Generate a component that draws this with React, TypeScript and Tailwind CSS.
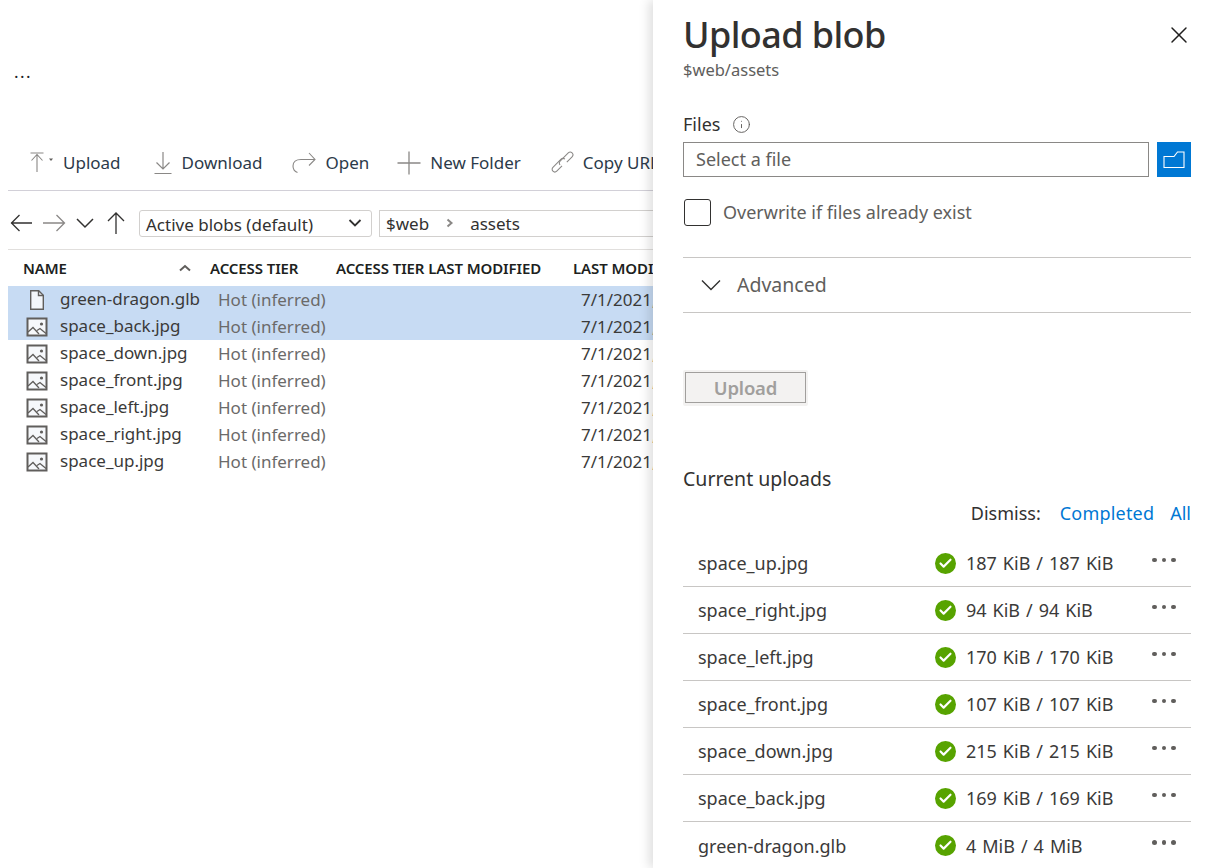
import React from 'react';
import { X, Info, Check } from 'lucide-react';

const blobs = [
  { name: 'green-dragon.glb', icon: 'file', selected: true },
  { name: 'space_back.jpg', icon: 'image', selected: true },
  { name: 'space_down.jpg', icon: 'image', selected: false },
  { name: 'space_front.jpg', icon: 'image', selected: false },
  { name: 'space_left.jpg', icon: 'image', selected: false },
  { name: 'space_right.jpg', icon: 'image', selected: false },
  { name: 'space_up.jpg', icon: 'image', selected: false },
];

const uploads = [
  { name: 'space_up.jpg', size: '187 KiB / 187 KiB' },
  { name: 'space_right.jpg', size: '94 KiB / 94 KiB' },
  { name: 'space_left.jpg', size: '170 KiB / 170 KiB' },
  { name: 'space_front.jpg', size: '107 KiB / 107 KiB' },
  { name: 'space_down.jpg', size: '215 KiB / 215 KiB' },
  { name: 'space_back.jpg', size: '169 KiB / 169 KiB' },
  { name: 'green-dragon.glb', size: '4 MiB / 4 MiB' },
];

function FileIcon() {
  return (
    <svg width="22" height="22" viewBox="0 0 22 22" fill="none" stroke="#605e5c" strokeWidth="1.4">
      <path d="M4.7 1.7h8l4.6 4.6v14H4.7z" fill="#f3f6fa" />
      <path d="M12.5 1.7v4.8h4.8" />
    </svg>
  );
}

function ImageIcon() {
  return (
    <svg width="22" height="22" viewBox="0 0 22 22" fill="none" stroke="#605e5c" strokeWidth="2">
      <rect x="1.5" y="2.5" width="19" height="17" fill="#f6f8fb" />
      <path d="M2 16l5-4.5 6 6.5M11 14.5l3-2 6 5" strokeWidth="1.3" />
      <circle cx="15.5" cy="8" r="1.6" fill="#605e5c" stroke="none" />
    </svg>
  );
}

function ToolbarItem({ icon, label }: { icon: React.ReactNode; label: string }) {
  return (
    <div className="flex items-center gap-[9px] shrink-0">
      {icon}
      <span className="whitespace-nowrap">{label}</span>
    </div>
  );
}

export default function App() {
  return (
    <div className="relative h-[868px] w-[1221px] overflow-hidden bg-white font-['Noto_Sans','Open_Sans',sans-serif] text-[17px] text-[#323130]">
      {/* Explorer behind the panel */}
      <div className="flex h-full w-[653px] flex-col overflow-hidden">
        <div className="h-[62px] shrink-0" />
        <div className="ml-[14px] h-[20px] shrink-0 text-[17px] leading-[20px] tracking-[1.5px] text-[#201f1e]">...</div>

        {/* Toolbar */}
        <div className="ml-[8px] mt-[44px] flex h-[65px] w-[720px] shrink-0 items-center border-b border-[#d2d0d8] pl-[22px] pt-[10px] text-[#2c3a4a]">
          <ToolbarItem
            label="Upload"
            icon={
              <svg width="24" height="24" viewBox="0 0 24 24" fill="none" stroke="#8a8886" strokeWidth="1.1">
                <path d="M0.5 2h13M7 3v18M1.5 9.5L7 3.5l5.5 6" />
                <path d="M19 7.5h4l-2 2.5z" fill="#605e5c" stroke="none" />
              </svg>
            }
          />
          <div className="ml-[32px]">
            <ToolbarItem
              label="Download"
              icon={
                <svg width="20" height="24" viewBox="0 0 20 24" fill="none" stroke="#8a8886" strokeWidth="1.2">
                  <path d="M10 1v17M3.5 11.5l6.5 6.5 6.5-6.5M1.5 22.5h17" />
                </svg>
              }
            />
          </div>
          <div className="ml-[30px]">
            <ToolbarItem
              label="Open"
              icon={
                <svg width="24" height="24" viewBox="0 0 24 24" fill="none" stroke="#8a8886" strokeWidth="1.1">
                  <path d="M17 2l6 6.5-6 6M23 8.5H9c-5 0-8 2.5-8 6.5 0 3 1.5 5.5 4.5 6.5" />
                </svg>
              }
            />
          </div>
          <div className="ml-[28px]">
            <ToolbarItem
              label="New Folder"
              icon={
                <svg width="24" height="24" viewBox="0 0 24 24" fill="none" stroke="#8a8886" strokeWidth="1.3">
                  <path d="M12 0.5v23M0.5 12h23" />
                </svg>
              }
            />
          </div>
          <div className="ml-[30px]">
            <ToolbarItem
              label="Copy URL"
              icon={
                <svg width="23" height="24" viewBox="0 0 24 24" fill="none" stroke="#8a8886" strokeWidth="1.1">
                  <path d="M10 14l-5.5 5.5a2.8 2.8 0 0 1-4-4L9 7a2.8 2.8 0 0 1 4 0" transform="translate(1.5 1)" />
                  <path d="M14 10l5.5-5.5a2.8 2.8 0 0 0-4-4L7 9a2.8 2.8 0 0 0 0 4" transform="translate(2.5 1)" />
                </svg>
              }
            />
          </div>
        </div>

        {/* Filter and path row */}
        <div className="ml-[8px] flex h-[59px] w-[720px] shrink-0 items-center border-b border-[#e1dfdd] pt-[6px]">
          <div className="ml-[2px] flex w-[129px] items-center pr-[8px]">
            <svg width="24" height="24" viewBox="0 0 24 24" fill="none" stroke="#323130" strokeWidth="1.3">
              <path d="M1 12h21M9.5 4L1.5 12l8 8" />
            </svg>
            <svg width="24" height="24" viewBox="0 0 24 24" fill="none" stroke="#8a8886" strokeWidth="1.3" className="ml-[8px]">
              <path d="M1 12h21M14.5 4l8 8-8 8" />
            </svg>
            <svg width="20" height="24" viewBox="0 0 20 24" fill="none" stroke="#323130" strokeWidth="1.5" className="ml-[9px]">
              <path d="M2 8l8 8 8-8" />
            </svg>
            <svg width="20" height="24" viewBox="0 0 20 24" fill="none" stroke="#323130" strokeWidth="1.3" className="ml-[11px]">
              <path d="M10 23V2M2 10l8-8 8 8" />
            </svg>
          </div>
          <div className="flex h-[27px] w-[233px] items-center justify-between rounded-[3px] border border-[#d2d0ce] pl-[6px] pr-[9px] text-[#323130]">
            <span className="whitespace-nowrap pt-[3px]">Active blobs (default)</span>
            <svg width="14" height="10" viewBox="0 0 14 10" fill="none" stroke="#323130" strokeWidth="1.8">
              <path d="M1.5 2l5.5 5.5L12.5 2" />
            </svg>
          </div>
          <div className="ml-[7px] flex h-[27px] w-[300px] items-center border border-[#d2d0ce] pl-[6px] text-[#323130]">
            <span className="pt-[2px]">$web</span>
            <svg width="10" height="10" viewBox="0 0 10 10" fill="none" stroke="#8a8886" strokeWidth="2" className="ml-[16px]">
              <path d="M2.5 1.5L6.5 5l-4 3.5" />
            </svg>
            <span className="ml-[15px] pt-[2px]">assets</span>
          </div>
        </div>

        {/* Blob table */}
        <div className="ml-[8px] grid h-[36px] w-[720px] shrink-0 grid-cols-[202px_126px_237px_1fr] items-center text-[15px] font-semibold tracking-[-0.1px] text-[#201f1e]">
          <div className="flex items-center justify-between pl-[15px] pr-[19px]">
            <span>NAME</span>
            <svg width="12" height="8" viewBox="0 0 12 8" fill="none" stroke="#605e5c" strokeWidth="2">
              <path d="M1 6.5L6 2l5 4.5" />
            </svg>
          </div>
          <span className="whitespace-nowrap">ACCESS TIER</span>
          <span className="whitespace-nowrap">ACCESS TIER LAST MODIFIED</span>
          <span className="whitespace-nowrap">LAST MODIFIED</span>
        </div>
        <div className="ml-[8px] w-[720px]">
          {blobs.map((blob) => (
            <div
              key={blob.name}
              className={`grid h-[27px] grid-cols-[210px_363px_1fr] items-center ${blob.selected ? 'bg-[#c7dbf3]' : ''}`}
            >
              <div className="flex items-center pl-[18px]">
                {blob.icon === 'file' ? <FileIcon /> : <ImageIcon />}
                <span className="ml-[12px] whitespace-nowrap pb-[1px] text-[#3b3a39]">{blob.name}</span>
              </div>
              <span className="whitespace-nowrap text-[#6b6a69]">Hot (inferred)</span>
              <span className="whitespace-nowrap text-[#3b3a39]">7/1/2021, 10:22:14 AM</span>
            </div>
          ))}
        </div>
      </div>

      {/* Upload panel, overlays the explorer */}
      <aside className="absolute inset-y-0 right-0 flex w-[568px] flex-col bg-white pl-[30px] pr-[30px] text-[18px] leading-[26px] shadow-[-4px_0_10px_rgba(0,0,0,0.13)] *:shrink-0">
        <div className="flex items-start justify-between">
          <h1 className="mt-[12px] text-[36px] font-medium leading-[46px] tracking-[-0.6px] text-[#323130]">Upload blob</h1>
          <X size={28} strokeWidth={1.25} className="mt-[21px] -mr-[2px] text-[#201f1e]" />
        </div>
        <div className="pt-[1px] text-[16.5px] leading-[22px] text-[#605e5c]">$web/assets</div>

        <div className="mt-[30px] flex h-[26px] items-center text-[#323130]">
          Files
          <Info size={19} strokeWidth={1.2} className="ml-[12px] text-[#605e5c]" />
        </div>
        <div className="mt-[5px] flex gap-[8px]">
          <div className="flex h-[35px] flex-1 items-center border border-[#8a8886] pb-[2px] pl-[12px] text-[#605e5c]">Select a file</div>
          <div className="flex h-[35px] w-[34px] items-center justify-center bg-[#0078d4]">
            <svg width="22" height="19" viewBox="0 0 22 19" fill="none" stroke="#fff" strokeWidth="1.1">
              <path d="M1 17.5V6.5h10l3.5-4.5h6.5v15.5zM1 6.5h10" />
            </svg>
          </div>
        </div>
        <div className="mt-[22px] flex h-[27px] items-center">
          <div className="ml-[1px] h-[27px] w-[27px] rounded-[3px] border border-[#323130]" />
          <span className="ml-[12px] pb-[2px] text-[#605e5c]">Overwrite if files already exist</span>
        </div>

        <div className="mt-[31px] flex h-[56px] items-center border-y border-[#c8c6c4] pl-[18px] text-[19.5px]">
          <svg width="20" height="12" viewBox="0 0 20 12" fill="none" stroke="#323130" strokeWidth="1.4">
            <path d="M1 1.5l9 9 9-9" />
          </svg>
          <span className="ml-[16px] text-[#605e5c]">Advanced</span>
        </div>

        <div className="mt-[57px] h-[36px] w-[125px] rounded-[2px] bg-[#f3f2f1] p-[2px]">
          <div className="flex h-[31px] items-center justify-center border border-[#a19f9d] text-[18.5px] font-semibold tracking-[-0.2px] text-[#a19f9d]">
            Upload
          </div>
        </div>

        <div className="mt-[60px] h-[26px] text-[19.5px] text-[#323130]">Current uploads</div>
        <div className="mt-[8px] flex h-[26px] items-center justify-end">
          <span>Dismiss:</span>
          <span className="ml-[19px] tracking-[0.2px] text-[#0078d4]">Completed</span>
          <span className="ml-[16px] text-[#0078d4]">All</span>
        </div>

        <div className="mt-[14px]">
          {uploads.map((upload) => (
            <div key={upload.name} className="flex h-[47px] items-center border-b border-[#c8c6c4] last:border-b-0">
              <span className="w-[252px] pl-[15px] text-[#3b3a39]">{upload.name}</span>
              <span className="flex h-[21px] w-[21px] items-center justify-center rounded-full bg-[#57a300]">
                <Check size={15} strokeWidth={3.4} className="text-white" />
              </span>
              <span className="ml-[10px] w-[186px] whitespace-nowrap text-[#3b3a39] [word-spacing:1.3px]">{upload.size}</span>
              <span className="mb-[6px] flex gap-[5px]">
                <span className="h-[4.5px] w-[4.5px] rounded-full bg-[#605e5c]" />
                <span className="h-[4.5px] w-[4.5px] rounded-full bg-[#605e5c]" />
                <span className="h-[4.5px] w-[4.5px] rounded-full bg-[#605e5c]" />
              </span>
            </div>
          ))}
        </div>
      </aside>
    </div>
  );
}
